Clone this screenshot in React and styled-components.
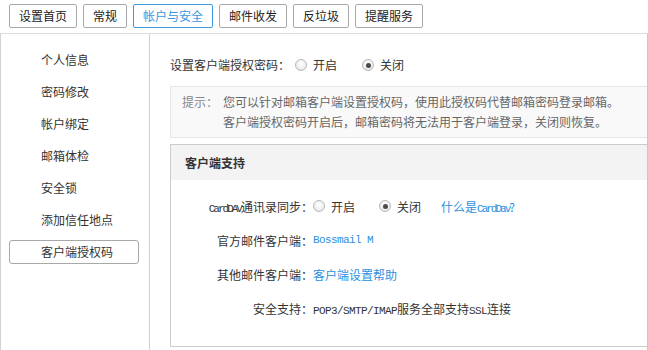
import styled, { createGlobalStyle } from 'styled-components';

const GlobalStyle = createGlobalStyle`
   html, body {
      margin: 0;
      padding: 0;
      background: #fff;
   }
   body {
      font-family: "Noto Sans CJK SC", "Noto Sans", sans-serif;
      font-size: 12px;
      color: #333;
   }
`;

const Page = styled.div`
   width: 648px;
   height: 350px;
   overflow: hidden;
   display: flex;
   flex-direction: column;
`;

const TopBar = styled.div`
   display: flex;
   gap: 6px;
   padding: 4px 9px 5px;
`;

const TabButton = styled.button`
   height: 24px;
   padding: 0 9px;
   border: 1px solid ${p => (p.$active ? '#3d9be3' : '#a9a9a9')};
   border-radius: 2px;
   background: #fff;
   color: ${p => (p.$active ? '#3a96de' : '#222')};
   font-family: inherit;
   font-size: 12px;
   line-height: 22px;
   cursor: pointer;
`;

const Body = styled.div`
   flex: 1;
   display: flex;
   border-top: 1px solid #dcdcdc;
   border-left: 1px solid #d2d2d2;
   border-right: 1px solid #c8c8c8;
`;

const Sidebar = styled.ul`
   width: 148px;
   margin: 0;
   padding: 14px 0 0;
   list-style: none;
   border-right: 1px solid #d0d0d0;
`;

const SideItem = styled.li`
   box-sizing: border-box;
   height: 24px;
   margin: 0 10px 8px 8px;
   padding-left: 31px;
   line-height: 22px;
   border: 1px solid ${p => (p.$active ? '#a8a8a8' : 'transparent')};
   border-radius: 3px;
   color: #333;
   cursor: pointer;
`;

const Main = styled.div`
   flex: 1;
   padding: 22px 0 0 20px;
   display: flex;
   flex-direction: column;
`;

const Line = styled.div`
   display: flex;
   align-items: center;
   height: 18px;
   line-height: 18px;
`;

const Option = styled.label`
   display: inline-flex;
   align-items: center;
   gap: 6px;
   margin-right: ${p => p.$gap || 24}px;
   cursor: pointer;
`;

const Radio = styled.span`
   box-sizing: border-box;
   width: 12px;
   height: 12px;
   border-radius: 50%;
   border: 1px solid #b8b8b8;
   background: radial-gradient(circle at 50% 40%, #ffffff 0%, #f0f0f0 55%, #d8d8d8 100%);
   display: inline-flex;
   align-items: center;
   justify-content: center;
   margin-left: ${p => p.$offset || 0}px;

   &::after {
      content: '';
      width: 5px;
      height: 5px;
      border-radius: 50%;
      background: #4a4a4a;
      display: ${p => (p.$checked ? 'block' : 'none')};
   }
`;

const TipBox = styled.div`
   margin-top: 12px;
   padding: 5px 10px 5px 11px;
   background: #f9f9f9;
   border: 1px solid #e6e6e6;
   border-right: none;
   display: grid;
   grid-template-columns: 36px 1fr;
   column-gap: 5px;
   line-height: 20px;
   color: #666;
`;

const TipLabel = styled.span`
   color: #888;
`;

const Section = styled.div`
   margin-top: 6px;
   border: 1px solid #cccccc;
   border-right: none;
`;

const SectionHead = styled.div`
   height: 35px;
   line-height: 35px;
   padding-left: 14px;
   background: #f3f3f3;
   font-weight: bold;
   color: #333;
`;

const Rows = styled.div`
   padding: 9px 0 21px;
`;

const Row = styled.div`
   display: grid;
   grid-template-columns: 142px 1fr;
   align-items: center;
   height: 34px;
`;

const RowLabel = styled.span`
   text-align: right;
   color: #333;
`;

const RowValue = styled.span`
   display: flex;
   align-items: center;
   color: ${p => (p.$link ? '#2d8fe0' : '#333')};
`;

const Latin = styled.span`
   font-family: "Liberation Mono", monospace;
   font-size: 11px;
   letter-spacing: ${p => (p.$tight ? '-2px' : '-0.6px')};
`;

const Link = styled.a`
   color: #2d8fe0;
   text-decoration: none;
   cursor: pointer;
`;

const tabs = ['设置首页', '常规', '帐户与安全', '邮件收发', '反垃圾', '提醒服务'];
const menu = ['个人信息', '密码修改', '帐户绑定', '邮箱体检', '安全锁', '添加信任地点', '客户端授权码'];

export default function App() {
   return (
      <Page>
         <GlobalStyle />
         <TopBar>
            {tabs.map(t => (
               <TabButton key={t} $active={t === '帐户与安全'}>{t}</TabButton>
            ))}
         </TopBar>
         <Body>
            <Sidebar>
               {menu.map(m => (
                  <SideItem key={m} $active={m === '客户端授权码'}>{m}</SideItem>
               ))}
            </Sidebar>
            <Main>
               <Line>
                  设置客户端授权密码：
                  <Option $gap={25}><Radio $offset={5} />开启</Option>
                  <Option><Radio $checked />关闭</Option>
               </Line>
               <TipBox>
                  <TipLabel>提示：</TipLabel>
                  <span>您可以针对邮箱客户端设置授权码，使用此授权码代替邮箱密码登录邮箱。</span>
                  <span />
                  <span>客户端授权密码开启后，邮箱密码将无法用于客户端登录，关闭则恢复。</span>
               </TipBox>
               <Section>
                  <SectionHead>客户端支持</SectionHead>
                  <Rows>
                     <Row>
                        <RowLabel><Latin $tight>CardDAV</Latin>通讯录同步：</RowLabel>
                        <RowValue>
                           <Option><Radio />开启</Option>
                           <Option $gap={20}><Radio $checked />关闭</Option>
                           <Link>什么是<Latin $tight>CardDav</Latin>?</Link>
                        </RowValue>
                     </Row>
                     <Row>
                        <RowLabel>官方邮件客户端：</RowLabel>
                        <RowValue $link><Latin>Bossmail M</Latin></RowValue>
                     </Row>
                     <Row>
                        <RowLabel>其他邮件客户端：</RowLabel>
                        <RowValue><Link>客户端设置帮助</Link></RowValue>
                     </Row>
                     <Row>
                        <RowLabel>安全支持：</RowLabel>
                        <RowValue>
                           <span><Latin>POP3/SMTP/IMAP</Latin>服务全部支持<Latin>SSL</Latin>连接</span>
                        </RowValue>
                     </Row>
                  </Rows>
               </Section>
            </Main>
         </Body>
      </Page>
   );
}
